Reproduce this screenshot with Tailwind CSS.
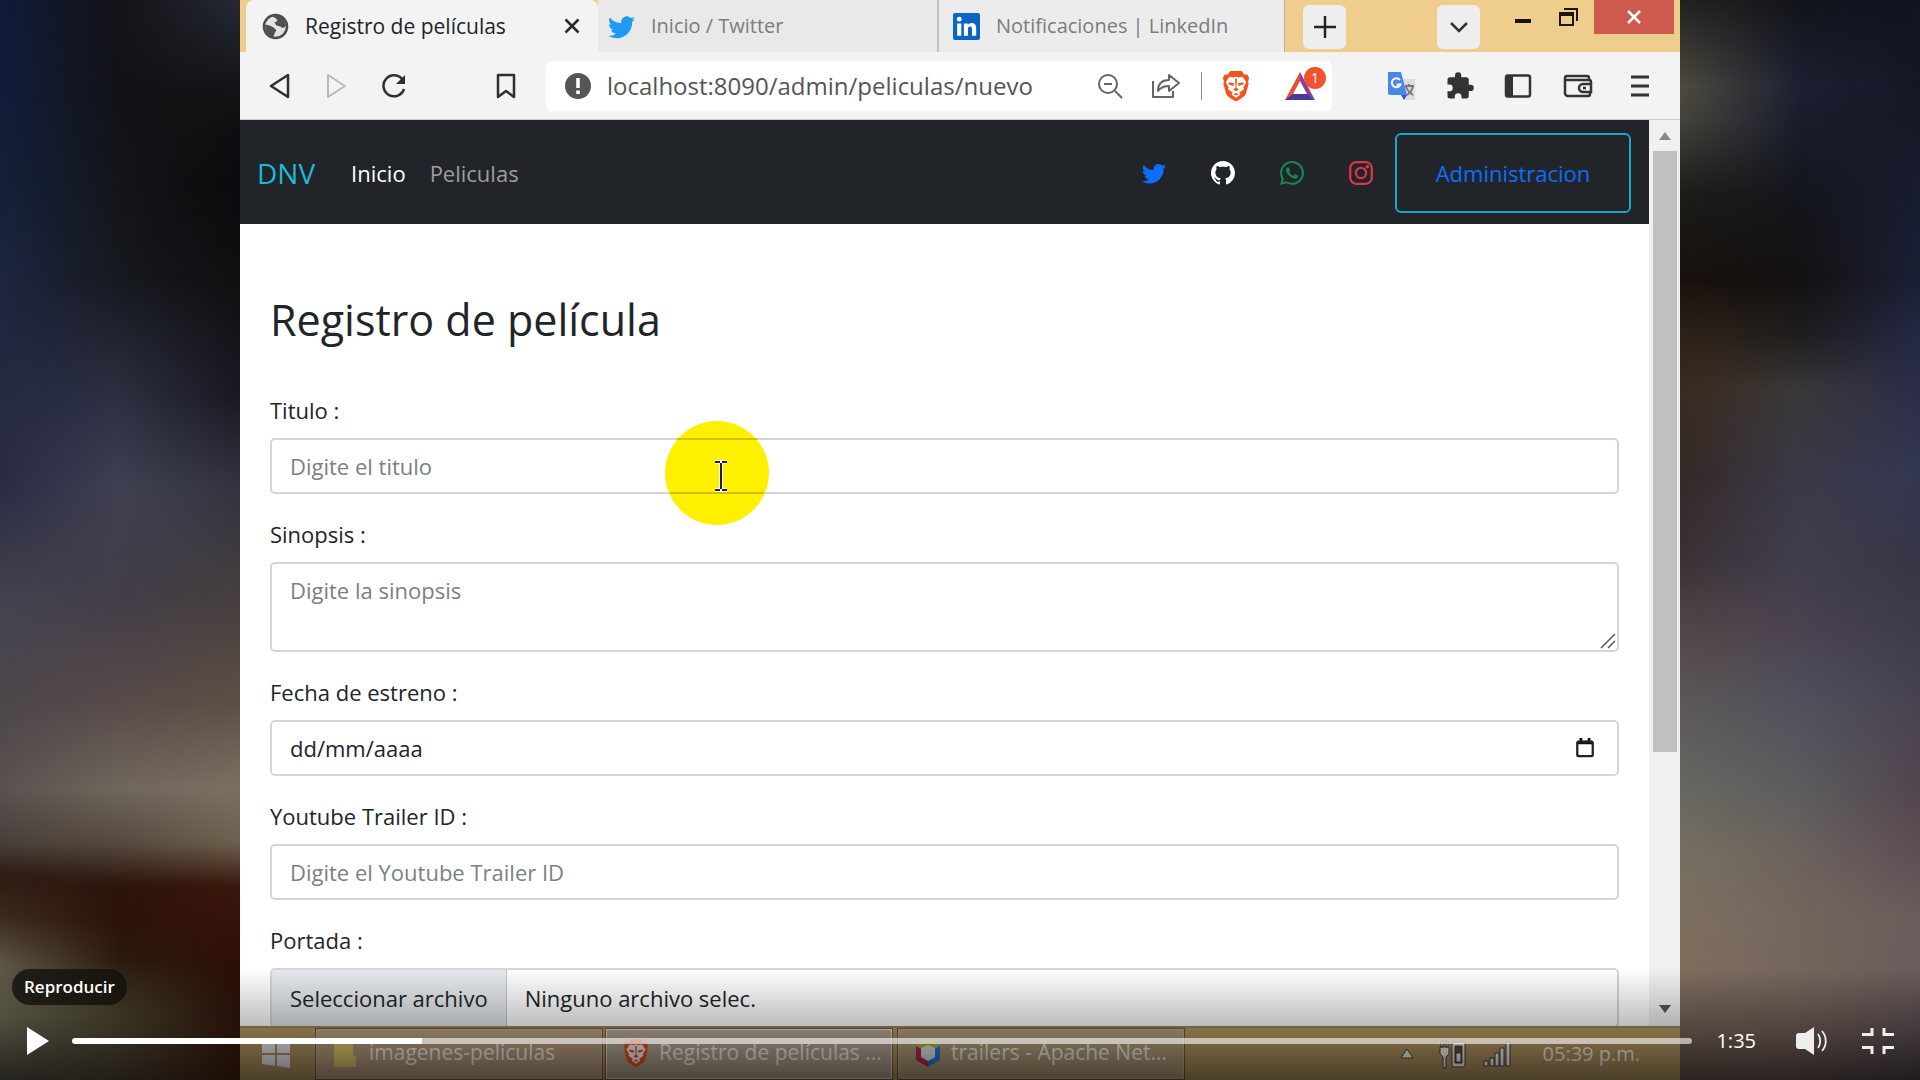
<!DOCTYPE html>
<html lang="es">
<head>
<meta charset="utf-8">
<meta name="viewport" content="width=device-width, initial-scale=1">
<title>Registro de películas</title>
<script src="https://cdn.jsdelivr.net/npm/@tailwindcss/browser@4"></script>
</head>
<body class="relative flex h-screen justify-center overflow-hidden bg-[#15161f] font-['Open_Sans','Noto_Sans',sans-serif] text-[#212529]">

<svg class="hidden" aria-hidden="true">
  <symbol id="bird" viewBox="0 0 16 16"><path d="M5.026 15c6.038 0 9.341-5.003 9.341-9.334 0-.14 0-.282-.006-.422A6.685 6.685 0 0 0 16 3.542a6.658 6.658 0 0 1-1.889.518 3.301 3.301 0 0 0 1.447-1.817 6.533 6.533 0 0 1-2.087.793A3.286 3.286 0 0 0 7.875 6.03a9.325 9.325 0 0 1-6.767-3.429 3.289 3.289 0 0 0 1.018 4.382A3.323 3.323 0 0 1 .64 6.575v.045a3.288 3.288 0 0 0 2.632 3.218 3.203 3.203 0 0 1-.865.115 3.23 3.23 0 0 1-.614-.057 3.283 3.283 0 0 0 3.067 2.277A6.588 6.588 0 0 1 .78 13.58a6.32 6.32 0 0 1-.78-.045A9.344 9.344 0 0 0 5.026 15z"/></symbol>
  <symbol id="lion" viewBox="0 0 30 34"><path fill="#f4511e" d="M9 1h12l3 4 3-.5 2 4-1 4 .5 2-3 11c-1 3-7 6-10.500 8C11.500 31.500 5.500 28.500 4.500 25.500l-3-11 .5-2-1-4 2-4L6 5z"/><path fill="#fff" d="M8 7l4 1 3-1 3 1 4-1 4 6-3 5 .5 2.500-5 3.500 1.500 2-5 3.500-5-3.500 1.500-2-5-3.500L7 18l-3-5z"/><path fill="#f4511e" d="M7 13l6 1-1 3-5-2zM23 13l-6 1 1 3 5-2zM14 9h2l-.5 10 2.500 2-3 1.500-3-1.500 2.500-2zM12 26l3-1.500 3 1.500-3 1z"/></symbol>
</svg>

<!-- Ambient backdrop: left and right -->
<div class="relative flex-1" aria-hidden="true">
  <div class="absolute inset-0 bg-[linear-gradient(#101a3a_0%,#15203a_17%,#1f2542_26%,#262a42_37%,#2a2c44_45%,#454350_56%,#4c464a_65%,#5a5250_73%,#48403c_78%,#2e1b12_81%,#3b2c1c_85%,#5c5444_89%,#696650_94%,#5f5a50_100%)]"></div>
  <div class="absolute inset-0 bg-[linear-gradient(#141317_0%,#131317_9%,#131519_17%,#16191f_26%,#2d3042_37%,#3f4052_45%,#443e48_56%,#574a4a_65%,#6f675d_73%,#564a3e_78%,#2c140b_82%,#2c1108_85%,#2b1a0f_89%,#48422d_94%,#55493a_100%)] mask-[linear-gradient(to_right,transparent,black_50%)]"></div>
  <div class="absolute inset-0 bg-[linear-gradient(#262a35_0%,#121214_9%,#0b0a0c_17%,#100f11_26%,#1a1922_37%,#33333f_45%,#47403f_56%,#5c4f45_65%,#7d7060_73%,#6e604e_78%,#3b180e_82%,#34120a_86%,#2a0e06_90%,#2d1408_94%,#42200f_100%)] mask-[linear-gradient(to_right,transparent_50%,black)]"></div>
</div>

<!-- Recorded desktop -->
<main class="flex w-3/4 flex-col overflow-hidden bg-white">
  <header>
    <div class="flex h-[52px] bg-[#efcd8d]">
      <div class="ml-1.5 flex w-[352px] items-center rounded-t-lg bg-[#f3f3f3] pl-4 pr-3">
        <svg class="size-[27px]" viewBox="0 0 28 28"><circle cx="14" cy="14" r="12" fill="#e3e3e3" stroke="#4b4b4b" stroke-width="2.500"/><path fill="#505050" d="M10 3c4-2 10-1 13 4l2 6c-2 3-4 3-6 1l-4-1-2-3 3-2-1-2zM3 12l5 1 4 2 3 3-2 3-1 4-3-1-5-5z"/></svg>
        <span class="ml-4 flex-1 whitespace-nowrap text-[21px] leading-7">Registro de películas</span>
        <button class="flex size-7 items-center justify-center" aria-label="Cerrar pestaña"><svg class="size-4" viewBox="0 0 16 16"><path d="M1.500 1.500l13 13M14.500 1.500l-13 13" stroke="#2b2b2b" stroke-width="2.500"/></svg></button>
      </div>
      <div class="flex w-[341px] items-center border-r-2 border-[#c4c4c4] bg-[#e9e9e9] pl-2.5">
        <svg class="size-[27px] fill-[#1d9bf0]"><use href="#bird"/></svg>
        <span class="ml-4 whitespace-nowrap text-[20px] leading-7 text-[#7c7c7c]">Inicio / Twitter</span>
      </div>
      <div class="flex w-[346px] items-center border-r border-[#c4b08c] bg-[#ececec] pl-3.5">
        <svg class="size-[27px]" viewBox="0 0 26 26"><rect width="26" height="26" rx="2" fill="#0a66c2"/><path fill="#fff" d="M4 10h4v12H4zM10.500 10h3.700v1.700c.7-1.200 2-2 3.800-2 3.500 0 4.300 2.300 4.300 5.500V22h-4v-6c0-1.500-.1-3-1.900-3s-2 1.400-2 3v6h-3.900z"/><circle cx="6" cy="6" r="2.300" fill="#fff"/></svg>
        <span class="ml-4 whitespace-nowrap text-[20px] leading-7 text-[#7c7c7c]">Notificaciones | LinkedIn</span>
      </div>
      <button class="ml-[18px] mt-[5px] flex h-11 w-[43px] items-center justify-center rounded-md bg-[#eeeeee]" aria-label="Nueva pestaña"><svg class="size-6" viewBox="0 0 24 24"><path d="M12 1v22M1 12h22" stroke="#222" stroke-width="2.500"/></svg></button>
      <div class="ml-auto flex">
        <button class="mr-[22px] mt-[5px] flex h-11 w-[43px] items-center justify-center rounded-md bg-[#eeeeee]" aria-label="Buscar pestañas"><svg class="h-3 w-5" viewBox="0 0 20 12"><path d="M2 2l8 8 8-8" fill="none" stroke="#333" stroke-width="2.500"/></svg></button>
        <button class="mr-1 flex h-9 w-[42px] items-center justify-center" aria-label="Minimizar"><svg class="h-7 w-4" viewBox="0 0 16 28"><path d="M0 15h16v4H0z" fill="#16120c"/></svg></button>
        <button class="mr-1 flex h-[34px] w-[42px] items-center justify-center" aria-label="Restaurar"><svg class="size-5" viewBox="0 0 20 20" fill="none" stroke="#1c1710" stroke-width="2"><path d="M1 6h13v12H1zM5 2h13v12"/><path d="M1 7.500h13" stroke-width="3"/></svg></button>
        <button class="mr-1.5 flex h-[34px] w-20 items-center justify-center bg-[#cd5a4c]" aria-label="Cerrar"><svg class="size-4" viewBox="0 0 16 16"><path d="M2 2l12 12M14 2L2 14" stroke="#fff" stroke-width="2.500"/></svg></button>
      </div>
    </div>

    <div class="flex h-[68px] items-center border-b border-[#d0d0d0] bg-[#f3f3f3] pr-[31px]">
      <div class="flex items-center pl-6">
        <button class="flex w-8 justify-center" aria-label="Atrás"><svg class="size-[26px]" viewBox="0 0 26 26"><path d="M21 2v22L4 13z" fill="none" stroke="#2f2f2f" stroke-width="2.500" stroke-linejoin="round"/></svg></button>
        <button class="ml-6 flex w-8 justify-center" aria-label="Adelante"><svg class="size-[26px]" viewBox="0 0 26 26"><path d="M5 2v22l17-11z" fill="none" stroke="#b9b9b9" stroke-width="2" stroke-linejoin="round"/></svg></button>
        <button class="ml-[26px] flex w-8 justify-center" aria-label="Recargar"><svg class="size-[26px]" viewBox="0 0 26 26"><path d="M23 16a10.500 10.500 0 1 1-2-10" fill="none" stroke="#2f2f2f" stroke-width="2.500"/><path d="M24 2v9h-9z" fill="#2f2f2f"/></svg></button>
        <button class="ml-20 flex w-8 justify-center" aria-label="Marcador"><svg class="size-[26px]" viewBox="0 0 26 26"><path d="M5 2h16v22l-8-6-8 6z" fill="none" stroke="#2f2f2f" stroke-width="2.500" stroke-linejoin="round"/></svg></button>
      </div>
      <div class="ml-6 flex h-[50px] min-w-0 flex-1 items-center rounded-md bg-white pl-[19px] pr-2.5">
        <svg class="size-[26px] shrink-0" viewBox="0 0 26 26"><circle cx="13" cy="13" r="13" fill="#555"/><path d="M11.200 5h3.600v10h-3.600zM11.200 17.500h3.600V21h-3.600z" fill="#fff"/></svg>
        <input class="ml-4 min-w-0 flex-1 text-[24px] leading-8 text-[#555] outline-none" type="text" aria-label="Dirección" value="localhost:8090/admin/peliculas/nuevo">
        <div class="flex items-center">
          <button aria-label="Zoom"><svg class="size-[26px]" viewBox="0 0 26 26" fill="none" stroke="#666" stroke-width="2"><circle cx="11" cy="11" r="9"/><path d="M18 18l7 7M7 11h8"/></svg></button>
          <button class="ml-7" aria-label="Compartir"><svg class="h-[26px] w-[30px]" viewBox="0 0 30 26" fill="none" stroke="#666" stroke-width="2"><path d="M2 8v16h20v-6M18 2l10 8-10 8v-5c-5 0-8 1-11 5 0-7 4-11 11-11z" stroke-linejoin="round"/></svg></button>
          <span class="ml-5 h-7 w-px bg-[#8a8a8a]"></span>
          <button class="ml-5" aria-label="Brave Shields"><svg class="h-[34px] w-[28px]"><use href="#lion"/></svg></button>
          <button class="relative ml-8" aria-label="Recompensas"><svg class="h-[34px] w-10" viewBox="0 0 40 34"><path d="M18 3L3 31h12l3-6-6 0 6-12z" fill="#ee4b36"/><path d="M18 3l15 28-8-5-7-13z" fill="#8c3f9b"/><path d="M3 31h30l-8-6H11z" fill="#4b3b96"/><path d="M18 12l7 13H11z" fill="#fff"/></svg><span class="absolute -right-1 -top-0.5 flex size-[22px] items-center justify-center rounded-full bg-[#f4522f] text-sm text-white">1</span></button>
        </div>
      </div>
      <div class="flex items-center gap-7 pl-[55px]">
        <button aria-label="Traductor"><svg class="size-[30px]" viewBox="0 0 30 30"><path d="M12 8h16v21H17z" fill="#dcdcdc"/><path d="M1 1h13l6 23H3a2 2 0 0 1-2-2z" fill="#4a86e8"/><path d="M14 24h6l-3 5z" fill="#2a56c6"/><path d="M13 9a4.500 4.500 0 1 0 .5 4.500H9.500" fill="none" stroke="#fff" stroke-width="2"/><path d="M18 15h9M22 13v2M19 16c2 5 4 6 7 8M26 15c-1 5-3 7-6 9" stroke="#777" stroke-width="1.800" fill="none"/></svg></button>
        <button aria-label="Extensiones"><svg class="size-[30px]" viewBox="0 0 24 24" fill="#333"><path d="M20.500 11H19V7a2 2 0 0 0-2-2h-4V3.500a2.500 2.500 0 0 0-5 0V5H4a2 2 0 0 0-2 2v3.800h1.500a2.700 2.700 0 0 1 0 5.400H2V20a2 2 0 0 0 2 2h3.800v-1.500a2.700 2.700 0 0 1 5.400 0V22H17a2 2 0 0 0 2-2v-4h1.500a2.500 2.500 0 0 0 0-5z"/></svg></button>
        <button aria-label="Panel lateral"><svg class="h-6 w-[30px]" viewBox="0 0 30 24"><rect x="3" y="1.500" width="24" height="21" rx="2" fill="none" stroke="#333" stroke-width="2.500"/><path d="M3 2h7v20H3z" fill="#333"/></svg></button>
        <button class="ml-0.5" aria-label="Cartera"><svg class="h-6 w-[30px]" viewBox="0 0 30 24" fill="none" stroke="#333" stroke-width="2.500"><path d="M26 7V4a2 2 0 0 0-2-2H4a2 2 0 0 0-2 2v15a3 3 0 0 0 3 3h20a2 2 0 0 0 2-2v-2M2 6h24a2 2 0 0 1 2 2v1"/><path d="M28 10h-8a4 4 0 0 0 0 8h8zM20 14h3"/></svg></button>
        <button class="pl-2.5" aria-label="Menú"><svg class="h-[22px] w-[18px]" viewBox="0 0 18 22"><path d="M0 2h18M0 11h18M0 20h18" stroke="#333" stroke-width="3"/></svg></button>
      </div>
    </div>
  </header>

  <div class="flex min-h-0 flex-1">
    <section class="flex min-w-0 flex-1 flex-col overflow-hidden">
      <nav class="flex h-[104px] shrink-0 items-center bg-[#212529] pl-[17px] pr-[18px] pt-0.5">
        <a href="#" class="text-[28px] leading-9 text-[#1fb8d8]">DNV</a>
        <a href="#" class="ml-9 text-[22px] leading-8 text-white">Inicio</a>
        <a href="#" class="ml-6 text-[22px] leading-8 text-[#9b9d9f]">Peliculas</a>
        <div class="ml-auto mr-[22px] flex items-center gap-[45px]">
          <a href="#" aria-label="Twitter"><svg class="size-6 fill-[#0d6efd]"><use href="#bird"/></svg></a>
          <a href="#" aria-label="GitHub"><svg class="size-6 fill-white" viewBox="0 0 16 16"><path d="M8 0C3.580 0 0 3.580 0 8c0 3.540 2.290 6.530 5.470 7.590.4.070.55-.17.55-.38 0-.19-.01-.82-.01-1.490-2.010.37-2.530-.49-2.690-.94-.09-.23-.48-.94-.82-1.130-.28-.15-.68-.52-.01-.53.63-.01 1.080.58 1.230.82.72 1.210 1.870.87 2.330.66.07-.52.28-.87.51-1.070-1.780-.2-3.640-.89-3.640-3.950 0-.87.31-1.590.82-2.150-.08-.2-.36-1.020.08-2.120 0 0 .67-.21 2.200.82.64-.18 1.320-.27 2-.27.68 0 1.360.09 2 .27 1.530-1.040 2.200-.82 2.200-.82.44 1.100.16 1.920.08 2.120.51.56.82 1.270.82 2.150 0 3.070-1.870 3.750-3.650 3.950.29.25.54.73.54 1.480 0 1.070-.01 1.930-.01 2.200 0 .21.15.46.55.38A8.012 8.012 0 0 0 16 8c0-4.420-3.580-8-8-8z"/></svg></a>
          <a href="#" aria-label="WhatsApp"><svg class="size-6 fill-[#198754]" viewBox="0 0 16 16"><path d="M13.601 2.326A7.854 7.854 0 0 0 7.994 0C3.627 0 .068 3.558.064 7.926c0 1.399.366 2.760 1.057 3.965L0 16l4.204-1.102a7.933 7.933 0 0 0 3.790.965h.004c4.368 0 7.926-3.558 7.930-7.930A7.898 7.898 0 0 0 13.600 2.326zM7.994 14.521a6.573 6.573 0 0 1-3.356-.920l-.240-.144-2.494.654.666-2.433-.156-.251a6.560 6.560 0 0 1-1.007-3.505c0-3.626 2.957-6.584 6.591-6.584a6.560 6.560 0 0 1 4.660 1.931 6.557 6.557 0 0 1 1.928 4.660c-.004 3.639-2.961 6.592-6.592 6.592zm3.615-4.934c-.197-.099-1.170-.578-1.353-.646-.182-.065-.315-.099-.445.099-.133.197-.513.646-.627.775-.114.133-.232.148-.430.050-.197-.100-.836-.308-1.592-.985-.590-.525-.985-1.175-1.103-1.372-.114-.198-.011-.304.088-.403.087-.088.197-.232.296-.346.100-.114.133-.198.198-.330.065-.134.034-.248-.015-.347-.050-.099-.445-1.076-.612-1.470-.160-.389-.323-.335-.445-.340-.114-.007-.247-.007-.380-.007a.729.729 0 0 0-.529.247c-.182.198-.691.677-.691 1.654 0 .977.710 1.916.810 2.049.098.133 1.394 2.132 3.383 2.992.470.205.840.326 1.129.418.475.152.904.129 1.246.080.380-.058 1.171-.480 1.338-.943.164-.464.164-.860.114-.943-.049-.084-.182-.133-.380-.232z"/></svg></a>
          <a href="#" aria-label="Instagram"><svg class="size-6" viewBox="0 0 16 16" fill="none" stroke="#dc3545" stroke-width="1.500"><rect x=".8" y=".8" width="14.400" height="14.400" rx="4"/><circle cx="8" cy="8" r="3.400"/><circle cx="12.200" cy="3.800" r=".5" fill="#dc3545"/></svg></a>
        </div>
        <a href="#" class="flex h-20 w-[236px] items-center justify-center rounded-md border-2 border-[#1ba5c8] text-[22px] leading-8 text-[#0d6efd]">Administracion</a>
      </nav>

      <form class="flex flex-col px-[30px] pt-[66px]">
        <h1 class="mb-5 text-[43px] font-medium leading-[60px]">Registro de película</h1>
        <label for="titulo" class="mb-3 mt-6 text-[22px] leading-8">Titulo :</label>
        <input id="titulo" type="text" placeholder="Digite el titulo" class="h-14 rounded-[5px] border-2 border-[#d3d6d9] px-[18px] text-[22px] placeholder:text-[#7b8085]">
        <label for="sinopsis" class="mb-3 mt-6 text-[22px] leading-8">Sinopsis :</label>
        <div class="relative flex">
          <textarea id="sinopsis" placeholder="Digite la sinopsis" class="h-[90px] flex-1 resize-none rounded-[5px] border-2 border-[#d3d6d9] px-[18px] py-2.5 text-[22px] leading-8 placeholder:text-[#7b8085]"></textarea>
          <svg class="absolute bottom-[3px] right-[3px] size-4" viewBox="0 0 16 16" stroke="#555" stroke-width="1.500" aria-hidden="true"><path d="M1 15L15 1M8 15l7-7"/></svg>
        </div>
        <label for="fecha" class="mb-3 mt-6 text-[22px] leading-8">Fecha de estreno :</label>
        <div class="flex h-14 items-center rounded-[5px] border-2 border-[#d3d6d9] px-[18px]">
          <input id="fecha" type="text" placeholder="dd/mm/aaaa" class="min-w-0 flex-1 text-[22px] placeholder:text-[#212529]">
          <button type="button" class="mr-1" aria-label="Abrir calendario"><svg class="size-5" viewBox="0 0 20 22"><path d="M2 3h16v4H2zM4 0h3v4H4zM13 0h3v4h-3z" fill="#111"/><rect x="1.500" y="4" width="17" height="16" rx="1.500" fill="none" stroke="#222" stroke-width="2.500"/></svg></button>
        </div>
        <label for="trailer" class="mb-3 mt-6 text-[22px] leading-8">Youtube Trailer ID :</label>
        <input id="trailer" type="text" placeholder="Digite el Youtube Trailer ID" class="h-14 rounded-[5px] border-2 border-[#d3d6d9] px-[18px] text-[22px] placeholder:text-[#7b8085]">
        <label for="portada" class="mb-3 mt-6 text-[22px] leading-8">Portada :</label>
        <div class="relative">
          <input id="portada" type="file" class="peer sr-only">
          <label for="portada" class="flex h-[60px] items-center overflow-hidden rounded-[5px] border-2 border-[#d3d6d9] text-[22px]">
            <span class="flex h-full items-center whitespace-nowrap border-r border-[#c3c7ca] bg-[#e5e9ed] px-[18px]">Seleccionar archivo</span>
            <span class="pl-[18px]">Ninguno archivo selec.</span>
          </label>
        </div>
      </form>
    </section>

    <div class="flex w-[31px] shrink-0 flex-col items-center bg-[#f0f0f0]" aria-hidden="true">
      <svg class="h-[31px] w-4 shrink-0" viewBox="0 0 16 31"><path d="M8 12l6 8H2z" fill="#888"/></svg>
      <div class="w-6 flex-[143] bg-[#c0c0c0]"></div>
      <div class="flex-[57]"></div>
      <svg class="h-[34px] w-4 shrink-0" viewBox="0 0 16 34"><path d="M2 13h12l-6 8z" fill="#555"/></svg>
    </div>
  </div>

  <footer class="flex h-[54px] shrink-0 items-center border-t-2 border-[#98865a] bg-[#b99a64] text-[20px] text-[#fffaf0]">
    <button class="ml-[22px]" aria-label="Inicio de Windows"><svg class="size-7" viewBox="0 0 28 28" fill="#f4f4f4"><path d="M0 4l13-2v11H0zM15 2l13-2v13H15zM0 15h13v11L0 24zM15 15h13v13l-13-2z"/></svg></button>
    <button class="ml-[25px] flex h-full w-[288px] items-center overflow-hidden border-2 border-[#cbb38a] bg-[#bfa384] pb-0.5 pl-4 outline-1 -outline-offset-1 outline-[#6e5c3e]"><svg class="h-7 w-6" viewBox="0 0 24 28"><path d="M1 0h19v16l3 1v11H1z" fill="#ecd373"/></svg><span class="ml-3 whitespace-nowrap text-[21px]">imagenes-peliculas</span></button>
    <button class="ml-0.5 flex h-full w-[288px] items-center overflow-hidden border-2 border-[#f2e8d8] bg-[#bcab97] pb-0.5 pl-4 outline-1 -outline-offset-1 outline-[#6e5c3e]"><svg class="h-8 w-[26px]"><use href="#lion"/></svg><span class="ml-2.5 whitespace-nowrap text-[21px]">Registro de películas ...</span></button>
    <button class="ml-1 flex h-full w-[288px] items-center overflow-hidden border-2 border-[#cbb38a] bg-[#b8a47e] pb-0.5 pl-4 outline-1 -outline-offset-1 outline-[#6e5c3e]"><svg class="h-7 w-[26px]" viewBox="0 0 26 28"><path d="M13 0l12 7-5 2-7-3-7 3-5-2z" fill="#a5c83c"/><path d="M1 7l5 3v8l7 4v6L1 21z" fill="#c8264c"/><path d="M25 7l-5 3v8l-7 4v6l12-7z" fill="#2b7fe4"/><path d="M13 6l7 3v9l-7 4-7-4V9z" fill="#edf3f5"/></svg><span class="ml-2.5 whitespace-nowrap text-[21px]">trailers - Apache Net...</span></button>
    <div class="ml-auto mr-10 flex items-center">
      <svg class="h-4 w-4" viewBox="0 0 16 16"><path d="M8 3l6 9H2z" fill="#fff" stroke="#574930"/></svg>
      <svg class="ml-6 h-[30px] w-7" viewBox="0 0 28 30" stroke="#4b4030"><path d="M1 8h9v7l-3 3v11H4V18l-3-3zM2 2h2v6H2zM7 2h2v6H7z" fill="#fff"/><rect x="13" y="3" width="13" height="25" rx="2" fill="#fff"/><path d="M16 7h7v17h-7z" fill="#5e5240"/><path d="M17 14h5v9h-5z" fill="#fff"/></svg>
      <svg class="ml-4 h-[26px] w-7" viewBox="0 0 28 26" fill="#fff" stroke="#4b4030"><path d="M1 20h4v5H1zM7 17h4v8H7zM12 12h4v13h-4zM17 7h4v18h-4zM23 1h4v24h-4z"/></svg>
      <span class="ml-8">05:39 p.m.</span>
    </div>
  </footer>
</main>

<div class="relative flex-1" aria-hidden="true">
  <div class="absolute inset-0 bg-[linear-gradient(#202220_0%,#4e4a3f_8%,#45443d_11%,#1c1c18_18%,#18110d_26%,#2e2218_31%,#3a2b20_36%,#342927_44%,#3b3237_52%,#524548_58%,#5c5858_65%,#686762_73%,#757060_79%,#7e7060_85%,#7f6e5e_90%,#6a5852_100%)]"></div>
  <div class="absolute inset-0 bg-[linear-gradient(#121419_0%,#1c2032_8%,#191d2c_11%,#14161d_18%,#141111_26%,#1f1d1d_31%,#393838_36%,#3b3948_44%,#413d4c_52%,#4a424f_58%,#51505c_65%,#5c5c5e_73%,#6b625e_79%,#74655e_85%,#74655d_90%,#6a5652_100%)] mask-[linear-gradient(to_right,transparent,black_50%)]"></div>
  <div class="absolute inset-0 bg-[linear-gradient(#101424_0%,#131726_8%,#141826_11%,#181c2f_18%,#1b2036_26%,#242844_31%,#2b2c48_36%,#353853_44%,#373647_52%,#3e3a4b_58%,#48424f_65%,#52454f_73%,#5c4e54_79%,#6b5c5c_85%,#6a5a5b_90%,#50464a_100%)] mask-[linear-gradient(to_right,transparent_50%,black)]"></div>
</div>

<!-- Pointer highlight over the form -->
<svg class="absolute left-[665px] top-[421px] size-[104px]" viewBox="0 0 104 104" aria-hidden="true">
  <circle cx="52" cy="52" r="52" fill="#fff000"/>
  <path d="M12 18h80M5 72h94" stroke="#cfc000" stroke-width="2"/>
  <path d="M50 41h12M50 69h12M56 41v28" stroke="#fff" stroke-width="4"/>
  <path d="M50 41h5M57 41h5M50 69h5M57 69h5M56 42v26" stroke="#2b1d20" stroke-width="2"/>
</svg>

<!-- Video player controls -->
<div class="absolute inset-x-0 bottom-0 flex h-[111px] flex-col items-start bg-[linear-gradient(transparent,rgb(0_0_0/.28)_55%,rgb(0_0_0/.6))] text-white">
  <div role="tooltip" class="ml-3 flex h-9 items-center rounded-full bg-[#12100d]/80 px-3 text-[17px] font-semibold">Reproducir</div>
  <div class="mt-3 flex h-12 w-full items-center pl-[27px] pr-[26px]">
    <button aria-label="Reproducir"><svg class="h-7 w-[22px]" viewBox="0 0 22 28"><path d="M0 0l22 14L0 28z" fill="#fff"/></svg></button>
    <input type="range" aria-label="Progreso" min="0" max="1000" value="216" class="ml-[23px] h-1.5 min-w-0 flex-1 appearance-none rounded-full [&::-webkit-slider-thumb]:size-0 [&::-webkit-slider-thumb]:appearance-none" style="background:linear-gradient(to right,#fff 21.6%,rgb(255 255 255/.6) 21.6%)">
    <span class="ml-6 text-[20px] leading-7">1:35</span>
    <button class="ml-10" aria-label="Volumen"><svg class="h-7 w-8" viewBox="0 0 32 28"><path d="M3 6h6l9-6v28l-9-6H3a3 3 0 0 1-3-3V9a3 3 0 0 1 3-3z" fill="#eee"/><path d="M22 7c3 4 3 10 0 14M26 4c5 6 5 14 0 20" fill="none" stroke="#eee" stroke-width="1.800"/></svg></button>
    <button class="ml-[34px]" aria-label="Salir de pantalla completa"><svg class="h-[26px] w-8" viewBox="0 0 32 26" fill="none" stroke="#eee" stroke-width="3"><path d="M0 6.500h10V0M32 6.500H22V0M0 19.500h10V26M32 19.500H22V26"/></svg></button>
  </div>
</div>
</body>
</html>
